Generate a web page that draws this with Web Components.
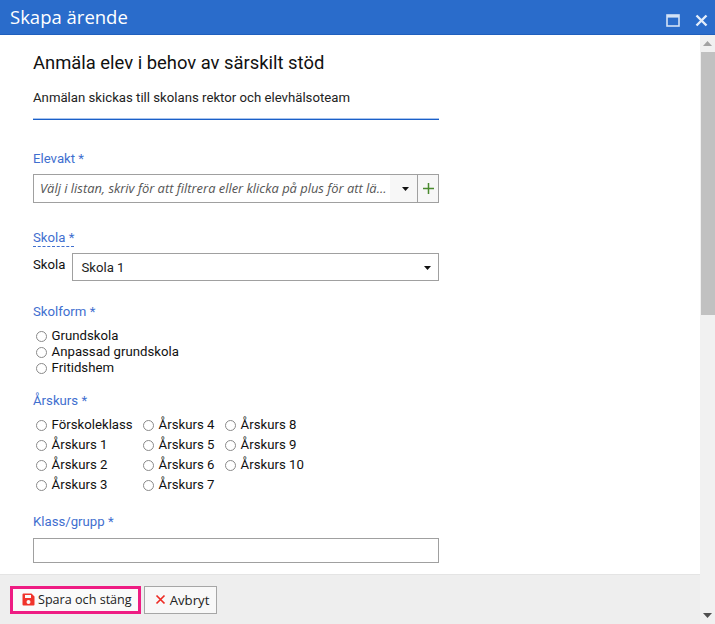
<!DOCTYPE html>
<html lang="sv">
<head>
<meta charset="utf-8">
<title>Skapa ärende</title>
<style>
  html, body { margin: 0; height: 100%; overflow: hidden; background: #fff; }
  body { font: 13.2px Roboto, sans-serif; color: #111; }
</style>
</head>
<body>
<case-dialog heading="Skapa ärende">
  <h-intro heading="Anmäla elev i behov av särskilt stöd">Anmälan skickas till skolans rektor och elevhälsoteam</h-intro>

  <form-field label="Elevakt *" style="margin-top:29px">
    <combo-input placeholder="Välj i listan, skriv för att filtrera eller klicka på plus för att lä..."></combo-input>
  </form-field>

  <form-field label="Skola *" hint style="margin-top:25px">
    <select-row label="Skola" value="Skola 1"></select-row>
  </form-field>

  <form-field label="Skolform *" style="margin-top:21px">
    <radio-group>
      <radio-item>Grundskola</radio-item>
      <radio-item>Anpassad grundskola</radio-item>
      <radio-item>Fritidshem</radio-item>
    </radio-group>
  </form-field>

  <form-field label="Årskurs *" style="margin-top:15px">
    <radio-grid>
      <radio-item>Förskoleklass</radio-item>
      <radio-item>Årskurs 4</radio-item>
      <radio-item>Årskurs 8</radio-item>
      <radio-item>Årskurs 1</radio-item>
      <radio-item>Årskurs 5</radio-item>
      <radio-item>Årskurs 9</radio-item>
      <radio-item>Årskurs 2</radio-item>
      <radio-item>Årskurs 6</radio-item>
      <radio-item>Årskurs 10</radio-item>
      <radio-item>Årskurs 3</radio-item>
      <radio-item>Årskurs 7</radio-item>
    </radio-grid>
  </form-field>

  <form-field label="Klass/grupp *" style="margin-top:17px">
    <text-input></text-input>
  </form-field>

  <action-button slot="footer" primary>
    <svg slot="icon" width="13" height="13" viewBox="0 0 13 13"><path fill="#f0332a" fill-rule="evenodd" d="M1.5 0.5h8l3 3v8a1 1 0 0 1-1 1h-10a1 1 0 0 1-1-1v-10a1 1 0 0 1 1-1zM3 2v3h6V2zM6.5 7a2 2 0 1 0 0 4a2 2 0 0 0 0-4z"/></svg>
    Spara och stäng
  </action-button>
  <action-button slot="footer">
    <svg slot="icon" width="11" height="11" viewBox="0 0 11 11"><path d="M1.5 1.500l8 8M9.500 1.500l-8 8" stroke="#ee2b24" stroke-width="1.700" fill="none"/></svg>
    Avbryt
  </action-button>
</case-dialog>

<script>
// Dialog shell: title bar, scrolling body, footer and a drawn scrollbar
class CaseDialog extends HTMLElement {
  connectedCallback() {
    const root = this.attachShadow({ mode: 'open' });
    root.innerHTML = `
      <style>
        :host { display: flex; flex-direction: column; height: 624px; width: 715px; }
        .title {
          height: 35px; flex: none; box-sizing: border-box; background: #2a6ccb;
          border-bottom: 1px solid #1f5fbd; color: #fff; display: flex; align-items: center;
          padding: 0 7px 0 10px; font: 18.5px "Open Sans", sans-serif;
        }
        .title span { flex: 1; position: relative; top: -1px; }
        .title svg { display: block; }
        .tools { display: flex; gap: 15px; align-items: center; padding-top: 6px; }
        .main { flex: 1; display: flex; min-height: 0; }
        .left { flex: 1; display: flex; flex-direction: column; min-width: 0; }
        .body { flex: 1; overflow: hidden; padding: 16px 0 0 33px; min-height: 0; }
        .footer {
          height: 50px; flex: none; box-sizing: border-box; background: #eeeeee;
          border-top: 1px solid #e4e4e4; display: flex; align-items: center; gap: 3px; padding: 0 0 0 10px;
        }
        .bar { width: 15px; flex: none; background: #f1f1f1; display: flex; flex-direction: column; align-items: center; }
        .arrow { height: 17px; flex: none; display: flex; align-items: center; justify-content: center; }
        .thumb { width: 14px; height: 263px; background: #c1c1c1; margin-left: 1px; }
        .track { flex: 1; }
      </style>
      <div class="title">
        <span>${this.getAttribute('heading')}</span>
        <div class="tools">
          <svg width="14" height="13" viewBox="0 0 14 13"><rect x="1" y="1" width="12" height="11" fill="none" stroke="#d3e2f6" stroke-width="1.6"/><rect x="1" y="1" width="12" height="2.6" fill="#d3e2f6"/></svg>
          <svg width="13" height="13" viewBox="0 0 13 13"><path d="M1.5 1.5l10 10M11.5 1.5l-10 10" stroke="#e4edfa" stroke-width="2.4" fill="none"/></svg>
        </div>
      </div>
      <div class="main">
        <div class="left">
          <div class="body"><slot></slot></div>
          <div class="footer"><slot name="footer"></slot></div>
        </div>
        <div class="bar">
          <div class="arrow"><svg width="9" height="5" viewBox="0 0 9 5"><path d="M4.5 0L9 5H0z" fill="#a3a3a3"/></svg></div>
          <div class="thumb"></div>
          <div class="track"></div>
          <div class="arrow"><svg width="9" height="5" viewBox="0 0 9 5"><path d="M0 0h9L4.500 5z" fill="#505050"/></svg></div>
        </div>
      </div>`;
  }
}

class HIntro extends HTMLElement {
  connectedCallback() {
    const root = this.attachShadow({ mode: 'open' });
    root.innerHTML = `
      <style>
        :host { display: block; width: 406px; border-bottom: 1px solid #1a5fc8; box-shadow: 0 1px 0 #fff; padding-bottom: 11px; }
        h1 { margin: 0 0 13px; font: 400 18.4px/24px Roboto, sans-serif; color: #111; }
        p { margin: 0; font: 13.2px/20px Roboto, sans-serif; color: #222; }
        .soft { height: 1px; background: #a8c4ee; margin: 0 0 -1px; position: relative; top: 10px; }
      </style>
      <h1>${this.getAttribute('heading')}</h1>
      <p><slot></slot></p>
      <div class="soft"></div>`;
  }
}

class FormField extends HTMLElement {
  connectedCallback() {
    const root = this.attachShadow({ mode: 'open' });
    const hint = this.hasAttribute('hint');
    root.innerHTML = `
      <style>
        :host { display: block; width: 406px; }
        label { display: block; margin-bottom: 5px; font: 13.2px/20px Roboto, sans-serif; color: #3f6fcf; }
        label span.hint { border-bottom: 1px dashed #3f6fcf; display: inline-block; line-height: 17px; }
      </style>
      <label>${hint ? `<span class="hint">${this.getAttribute('label')}</span>` : this.getAttribute('label')}</label>
      <slot></slot>`;
  }
}

class ComboInput extends HTMLElement {
  connectedCallback() {
    const root = this.attachShadow({ mode: 'open' });
    root.innerHTML = `
      <style>
        :host { display: flex; height: 29px; box-sizing: border-box; border: 1px solid #a0a0a0; background: #fff; }
        .text { flex: 1; min-width: 0; padding: 0 0 0 6px; font: italic 12.9px/27px "Open Sans", sans-serif; color: #555; white-space: nowrap; overflow: hidden; }
        .drop { width: 27px; box-sizing: border-box; padding-left: 3px; background: #f7f7f7; display: flex; align-items: center; justify-content: center; }
        .plus { width: 20px; border-left: 1px solid #a0a0a0; background: #f7f7f7; display: flex; align-items: center; justify-content: center; }
        svg { display: block; }
      </style>
      <div class="text">${this.getAttribute('placeholder')}</div>
      <div class="drop"><svg width="7" height="4" viewBox="0 0 7 4"><path d="M0 0h7L3.500 4z" fill="#111"/></svg></div>
      <div class="plus"><svg width="11" height="11" viewBox="0 0 11 11"><path d="M5.500 0v11M0 5.500h11" stroke="#4a8a2e" stroke-width="1.500"/></svg></div>`;
  }
}

class SelectRow extends HTMLElement {
  connectedCallback() {
    const root = this.attachShadow({ mode: 'open' });
    root.innerHTML = `
      <style>
        :host { display: flex; gap: 7px; align-items: flex-start; }
        .lab { font: 13.2px/24px Roboto, sans-serif; color: #111; }
        .box {
          flex: 1; height: 28px; box-sizing: border-box; border: 1px solid #a0a0a0; background: #fff;
          display: flex; align-items: center; justify-content: space-between; padding: 1px 7px 0 8px;
          font: 13.2px Roboto, sans-serif; color: #222;
        }
      </style>
      <span class="lab">${this.getAttribute('label')}</span>
      <div class="box"><span>${this.getAttribute('value')}</span><svg width="7" height="4" viewBox="0 0 7 4"><path d="M0 0h7L3.500 4z" fill="#111"/></svg></div>`;
  }
}

class RadioItem extends HTMLElement {
  connectedCallback() {
    const root = this.attachShadow({ mode: 'open' });
    root.innerHTML = `
      <style>
        :host { display: flex; align-items: center; gap: 3.6px; font: 13.2px/16px Roboto, sans-serif; color: #111; white-space: nowrap; padding-left: 3px; }
        i { width: 9px; height: 9px; margin-right: 1px; border: 1px solid #8a8a8a; border-radius: 50%; background: #fff; flex: none; }
      </style>
      <i></i><span><slot></slot></span>`;
  }
}

class RadioGroup extends HTMLElement {
  connectedCallback() {
    const root = this.attachShadow({ mode: 'open' });
    root.innerHTML = `<style>:host { display: block; padding-top: 1px; }</style><slot></slot>`;
  }
}

class RadioGrid extends HTMLElement {
  connectedCallback() {
    const root = this.attachShadow({ mode: 'open' });
    root.innerHTML = `
      <style>
        :host { display: grid; margin-top: -1px; grid-template-columns: 107px 82px auto; grid-auto-rows: 20px; align-items: center; justify-content: start; }
      </style>
      <slot></slot>`;
  }
}

class TextInput extends HTMLElement {
  connectedCallback() {
    const root = this.attachShadow({ mode: 'open' });
    root.innerHTML = `<style>:host { display: block; height: 25px; margin-top: 6px; box-sizing: border-box; border: 1px solid #a0a0a0; background: #fff; }</style>`;
  }
}

class ActionButton extends HTMLElement {
  connectedCallback() {
    const root = this.attachShadow({ mode: 'open' });
    root.innerHTML = `
      <style>
        :host {
          display: inline-flex; align-items: center; gap: 4px; box-sizing: border-box; height: 28px; padding: 0 7px 0 10px;
          background: #f8f8f8; border: 1px solid #a6a6a6; font: 13.2px "Open Sans", sans-serif; color: #222;
        }
        :host([primary]) { border: 3px solid #ee1c83; background: #fafafa; padding: 0 6px 0 9px; gap: 3px; font-size: 12.6px; }
        ::slotted(svg) { display: block; }
      </style>
      <slot name="icon"></slot><slot></slot>`;
  }
}

customElements.define('case-dialog', CaseDialog);
customElements.define('h-intro', HIntro);
customElements.define('form-field', FormField);
customElements.define('combo-input', ComboInput);
customElements.define('select-row', SelectRow);
customElements.define('radio-item', RadioItem);
customElements.define('radio-group', RadioGroup);
customElements.define('radio-grid', RadioGrid);
customElements.define('text-input', TextInput);
customElements.define('action-button', ActionButton);
</script>
</body>
</html>
